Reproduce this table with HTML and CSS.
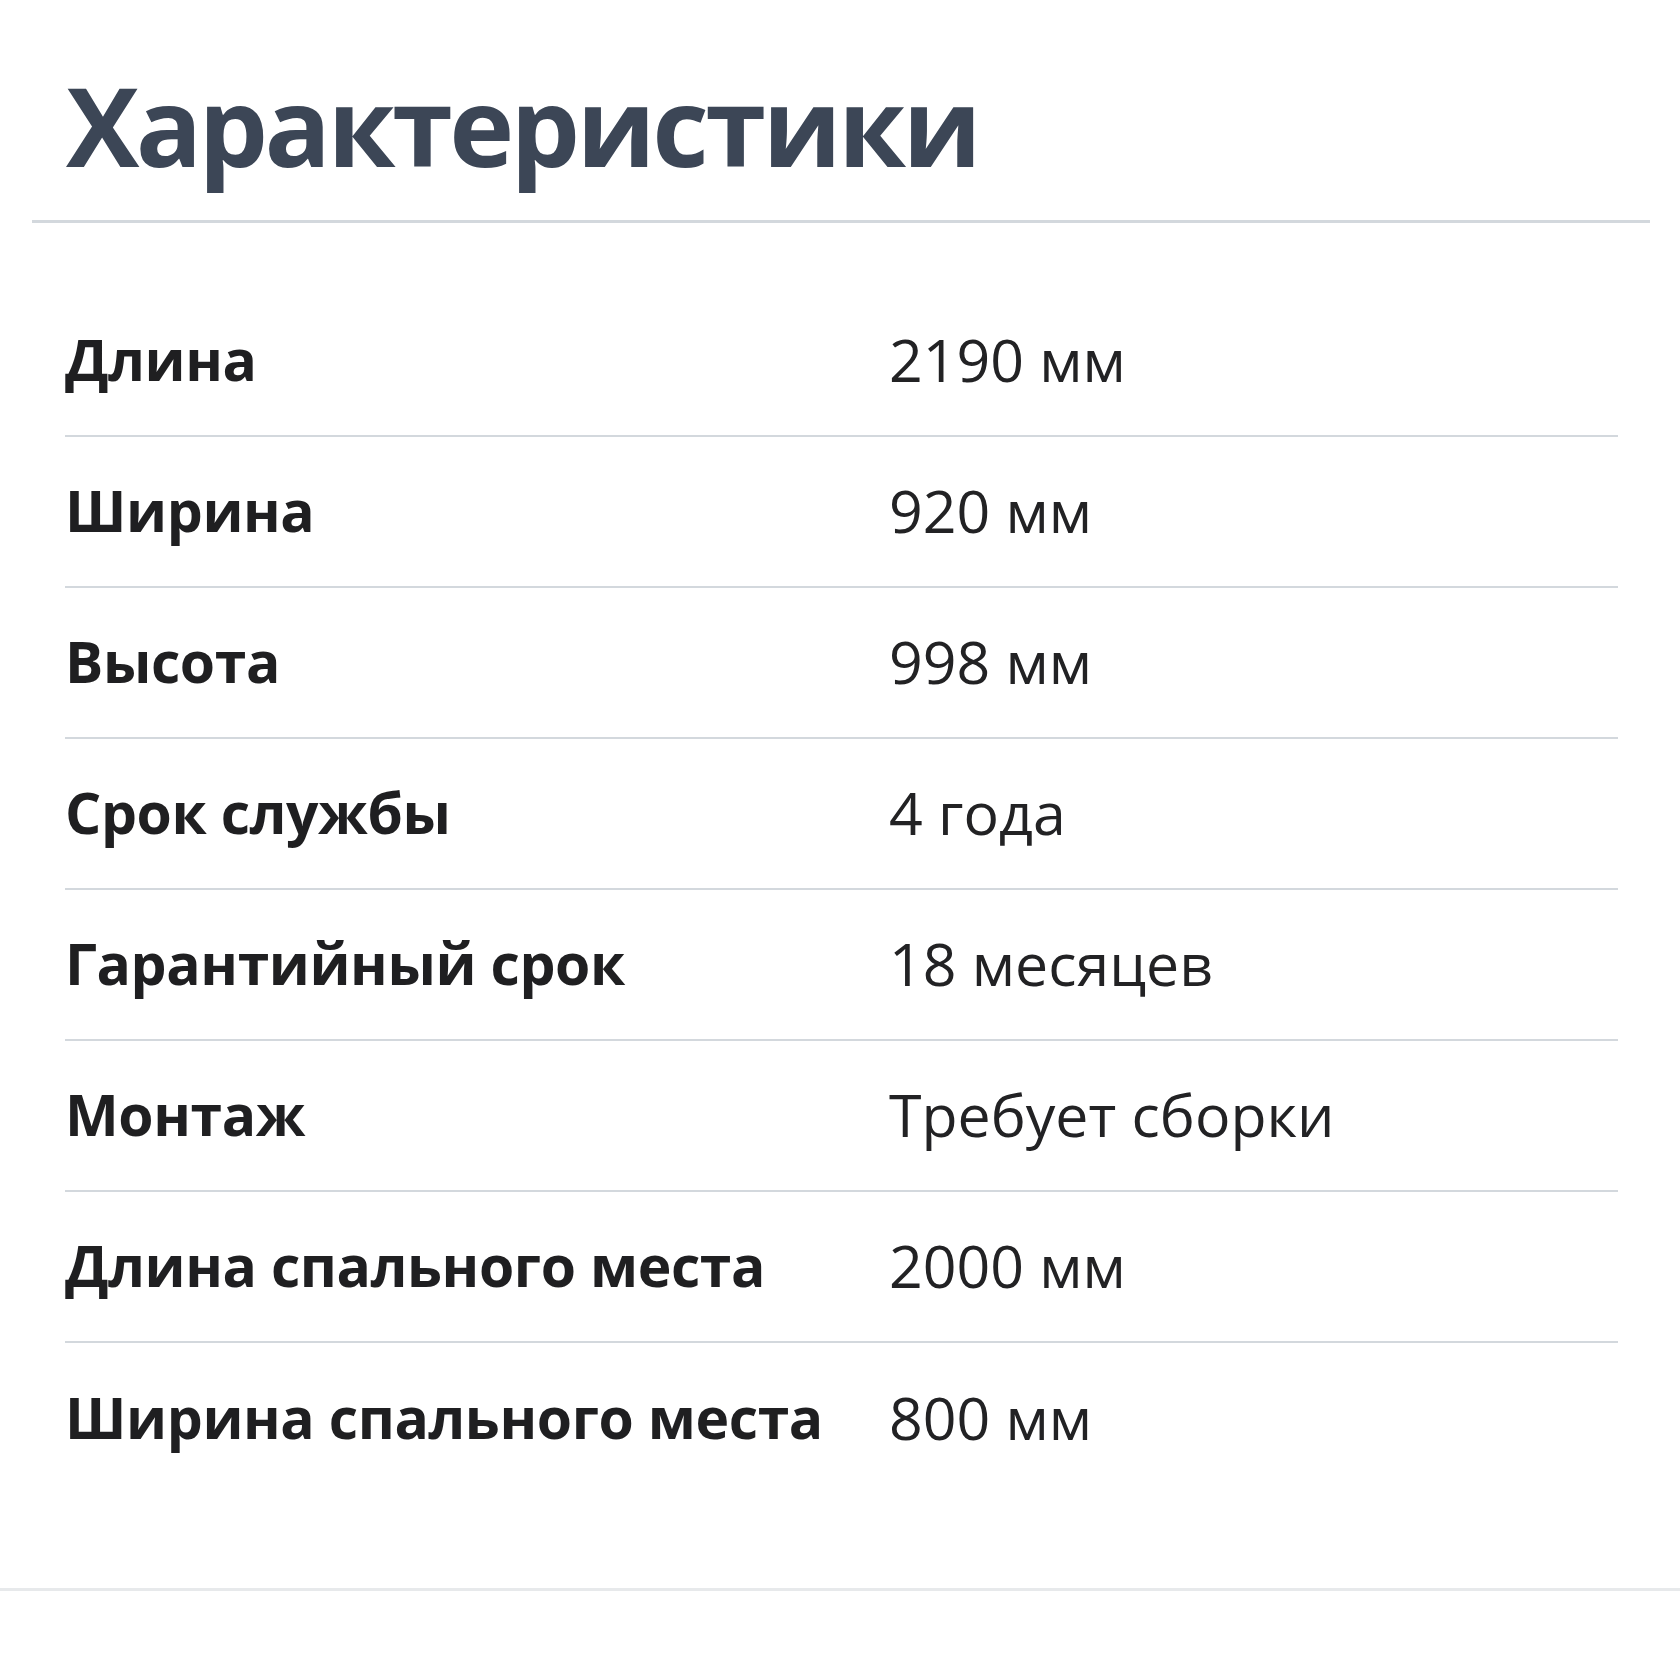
FILE: index.html
```html
<!DOCTYPE html>
<html lang="ru">
<head>
<meta charset="utf-8">
<title>Характеристики</title>
<link rel="stylesheet" href="styles.css">
</head>
<body>
<section class="specs">
  <header class="specs-header">
    <h1 class="specs-title">Характеристики</h1>
  </header>
  <dl class="specs-list">
    <div class="spec-row"><dt class="spec-label">Длина</dt><dd class="spec-value">2190 мм</dd></div>
    <div class="spec-row"><dt class="spec-label">Ширина</dt><dd class="spec-value">920 мм</dd></div>
    <div class="spec-row"><dt class="spec-label">Высота</dt><dd class="spec-value">998 мм</dd></div>
    <div class="spec-row"><dt class="spec-label">Срок службы</dt><dd class="spec-value">4 года</dd></div>
    <div class="spec-row"><dt class="spec-label">Гарантийный срок</dt><dd class="spec-value">18 месяцев</dd></div>
    <div class="spec-row"><dt class="spec-label">Монтаж</dt><dd class="spec-value">Требует сборки</dd></div>
    <div class="spec-row"><dt class="spec-label">Длина спального места</dt><dd class="spec-value">2000 мм</dd></div>
    <div class="spec-row"><dt class="spec-label">Ширина спального места</dt><dd class="spec-value">800 мм</dd></div>
  </dl>
  <div class="specs-footer"></div>
</section>
</body>
</html>
```

FILE: styles.css
```css
html, body {
  margin: 0;
  padding: 0;
  background: #ffffff;
}

body {
  font-family: "Open Sans", "Noto Sans", "Liberation Sans", sans-serif;
  color: #1f1f21;
}

.specs {
  width: 1680px;
  padding-bottom: 90px;
}

.specs-header {
  margin: 0 30px 0 32px;
  border-bottom: 3px solid #d3d8dd;
  padding: 54px 0 26px 34px;
}

.specs-title {
  margin: 0;
  font-size: 110px;
  line-height: 140px;
  font-weight: 700;
  color: #3c4656;
  letter-spacing: -3.6px;
}

.specs-list {
  margin: 63px 62px 0 65px;
  padding: 0;
}

.spec-row {
  display: grid;
  grid-template-columns: 824px 1fr;
  align-items: center;
  height: 146px;
  padding-bottom: 3px;
  border-bottom: 2px solid #d3d8dd;
}

.spec-row:last-child {
  border-bottom: none;
  height: 148px;
}

.spec-label {
  margin: 0;
  font-size: 57px;
  font-weight: 700;
  letter-spacing: -0.4px;
  color: #1f1f21;
}

.spec-value {
  margin: 0;
  font-size: 59px;
  font-weight: 400;
  color: #222224;
}

.specs-footer {
  margin-top: 94px;
  border-top: 3px solid #e7e9eb;
}
```
